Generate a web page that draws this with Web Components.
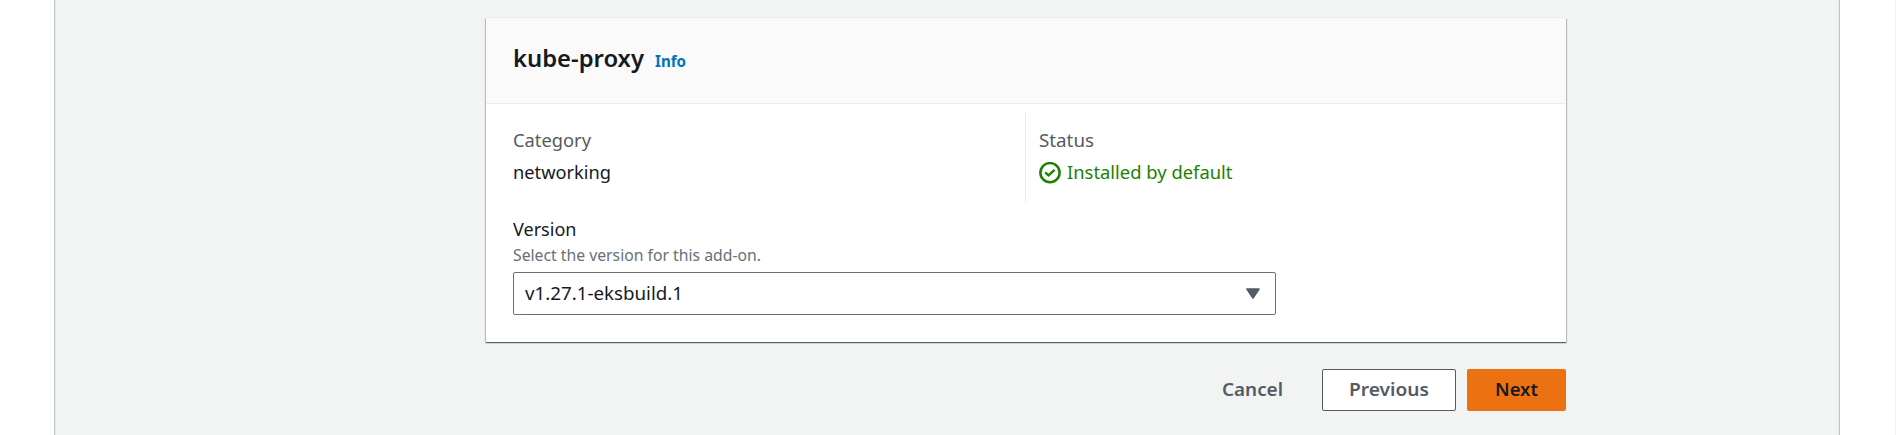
<!DOCTYPE html>
<html lang="en">
<head>
<meta charset="utf-8">
<title>kube-proxy add-on</title>
<style>
html,body{margin:0;height:100%;overflow:hidden;background:#fff}
body{font-family:"Noto Sans","Open Sans",sans-serif;color:#16191f}
</style>
</head>
<body>
<addon-page></addon-page>
<script>
const define = (name, html, setup) => {
  const template = document.createElement('template');
  template.innerHTML = html;
  customElements.define(name, class extends HTMLElement {
    constructor() {
      super();
      this.attachShadow({mode: 'open'}).append(template.content.cloneNode(true));
    }
    connectedCallback() { if (setup) setup(this, this.shadowRoot); }
  });
};

// A single line of text condensed to a set advance width.
define('text-run', `
<style>
:host{display:block;flex:none;font-size:18px;line-height:24px;height:24px}
:host([kind=title]){font-size:23px;font-weight:600;line-height:30px;height:30px}
:host([kind=info]){font-size:15.5px;font-weight:700;line-height:20px;height:20px;color:#0073bb}
:host([kind=hint]){font-size:16px;line-height:20px;height:20px;color:#687078}
:host([kind=label]){color:#545b64}
:host([kind=status]){color:#1d8102}
:host([kind=button]){font-weight:600}
span{display:inline-block;white-space:nowrap;transform-origin:0 50%}
</style><span><slot></slot></span>`, (host, root) => {
  const span = root.querySelector('span');
  const width = Number(host.getAttribute('width'));
  host.style.width = width + 'px';
  span.style.transform = `scaleX(${width / span.getBoundingClientRect().width})`;
});

define('status-icon', `
<style>:host{display:block;flex:none;width:22px;height:22px}svg{display:block}</style>
<svg width="22" height="22" viewBox="0 0 22 22" fill="none" stroke="#1d8102" stroke-width="2.5"><circle cx="11" cy="10.7" r="9.6"/><path d="M6.2 10.4 9.5 13.4 15.6 7.8"/></svg>`);

define('page-button', `
<style>
:host{box-sizing:border-box;display:flex;flex:none;align-items:center;justify-content:center;height:42px;padding-bottom:2px;border:1px solid transparent;border-radius:2px;color:#545b64}
:host([variant=link]){width:99px}
:host([variant=normal]){width:134px;background:#fff;border-color:#545b64}
:host([variant=primary]){width:99px;background:#ec7211;color:#16191f}
</style><slot></slot>`);

define('version-select', `
<style>
:host{box-sizing:border-box;display:flex;justify-content:space-between;align-items:center;width:763px;height:43px;border:1px solid #687078;border-radius:2px;padding:0 15px 1px 11px;background:#fff}
svg{display:block}
</style><slot></slot>
<svg width="14" height="11" viewBox="0 0 14 11"><path d="M1 1H13L7 10Z" fill="#545b64" stroke="#545b64" stroke-width="1.6" stroke-linejoin="round"/></svg>`);

define('addon-card', `
<style>
:host{display:block;width:1080px;height:324px;background:#fff;box-shadow:0 1px 1px 0 rgba(0,28,36,.5),1px 1px 1px 0 rgba(0,28,36,.18),-1px 1px 1px 0 rgba(0,28,36,.18),0 -1px 0 0 #eaeded}
header{box-sizing:border-box;display:flex;gap:11px;height:86px;padding:25px 27px;background:#fafafa;border-bottom:1px solid #eaeded}
header text-run[kind=info]{margin-top:8px}
.cols{display:grid;grid-template-columns:539px 1fr;padding-top:9px;height:89px}
.cols>div{padding:15px 0 0 27px}
.cols>div+div{padding-left:13px;border-left:1px solid #eaeded}
.cols [kind=label]{margin-bottom:8px}
.status{display:flex;gap:6px}
.status status-icon{margin-top:2px}
.field{padding:15px 27px 0}
.field text-run[kind=hint]{margin:4px 0 7px}
</style>
<header><text-run kind="title" width="131">kube-proxy</text-run><text-run kind="info" width="31">Info</text-run></header>
<section class="cols">
<div><text-run kind="label" width="78">Category</text-run><text-run width="98">networking</text-run></div>
<div><text-run kind="label" width="55">Status</text-run><div class="status"><status-icon></status-icon><text-run kind="status" width="165.5">Installed by default</text-run></div></div>
</section>
<section class="field"><text-run width="63.5">Version</text-run><text-run kind="hint" width="248">Select the version for this add-on.</text-run><version-select><text-run width="158">v1.27.1-eksbuild.1</text-run></version-select></section>`);

define('addon-page', `
<style>
:host{display:block;box-sizing:border-box;height:435px;padding:0 55px 0 54px;border-right:1px solid #eff0f0}
main{box-sizing:border-box;height:435px;background:#f2f3f3;border:solid #bfc7c7;border-width:0 1px;box-shadow:inset 1px 0 #e4e9e9,inset -1px 0 #e4e9e9;padding:18px 0 0 431px}
nav{display:flex;justify-content:flex-end;width:1080px;margin-top:27px}
page-button[variant=link]{margin-right:20px}
page-button[variant=normal]{margin-right:11px}
</style>
<main><addon-card></addon-card>
<nav><page-button variant="link"><text-run kind="button" width="61">Cancel</text-run></page-button><page-button variant="normal"><text-run kind="button" width="80">Previous</text-run></page-button><page-button variant="primary"><text-run kind="button" width="43">Next</text-run></page-button></nav></main>`);
</script>
</body>
</html>
